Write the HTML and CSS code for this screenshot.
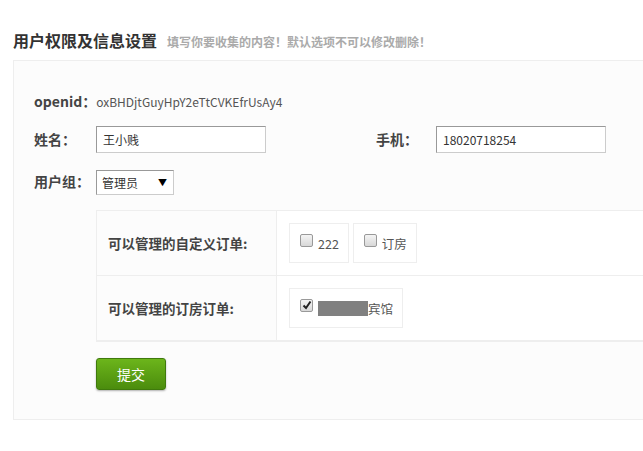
FILE: index.html
```html
<!DOCTYPE html>
<html>
<head>
<meta charset="utf-8">
<link rel="stylesheet" href="styles.css">
</head>
<body>
<div class="page">
  <h2 class="title">用户权限及信息设置<span class="sub">填写你要收集的内容！默认选项不可以修改删除！</span></h2>
  <div class="panel">
    <div class="row openid"><span class="lbl">openid：</span><span class="val">oxBHDjtGuyHpY2eTtCVKEfrUsAy4</span></div>
    <div class="row">
      <span class="lbl">姓名：</span><input class="txt" type="text" value="王小贱">
      <span class="lbl lbl2">手机：</span><input class="txt" type="text" value="18020718254">
    </div>
    <div class="row">
      <span class="lbl">用户组：</span>
      <div class="sel"><span>管理员</span><span class="arr">▼</span></div>
    </div>
    <div class="tbl">
      <div class="tr">
        <div class="th">可以管理的自定义订单:</div>
        <div class="td">
          <label class="opt"><span class="cb"></span>222</label>
          <label class="opt"><span class="cb"></span>订房</label>
        </div>
      </div>
      <div class="tr">
        <div class="th">可以管理的订房订单:</div>
        <div class="td">
          <label class="opt"><span class="cb on"><svg width="10" height="10" viewBox="0 0 10 10"><path d="M1.5 5.5 L4 8 L8.5 1.5" fill="none" stroke="#222" stroke-width="2"/></svg></span><span class="mask"></span>宾馆</label>
        </div>
      </div>
    </div>
    <button class="btn">提交</button>
  </div>
</div>
</body>
</html>
```
FILE: styles.css
```css
html, body { margin: 0; padding: 0; background: #fff; }
body { font-family: "Microsoft YaHei", "Noto Sans CJK SC", sans-serif; color: #333; width: 643px; height: 451px; overflow: hidden; }
.page { padding: 28px 0 0 13px; }
.title { margin: 0; font-size: 16px; font-weight: bold; color: #333; line-height: 24px; height: 32px; }
.sub { font-size: 12px; color: #aaa; margin-left: 10px; font-weight: bold; }
.panel { background: #fcfcfc; border: 1px solid #eee; border-right: none; width: 660px; height: 360px; box-sizing: border-box; padding: 30px 0 0 20px; }
.row { display: flex; align-items: center; height: 26px; margin-bottom: 16px; }
.openid { height: 20px; margin-bottom: 15px; }
.lbl { font-size: 14px; font-weight: bold; color: #444; width: 62px; }
.openid .lbl { width: auto; }
.val { font-size: 12px; color: #555; }
.lbl2 { margin-left: 110px; width: 60px; }
.txt { width: 170px; height: 27px; box-sizing: border-box; border: 1px solid #ccc; border-top-color: #999; border-left-color: #999; padding: 0 6px; font: 12px "Microsoft YaHei", "Noto Sans CJK SC", sans-serif; color: #333; background: #fff; margin: 0; outline: none; }
.sel { width: 78px; height: 25px; box-sizing: border-box; border: 1px solid #ccc; border-top-color: #999; border-left-color: #999; background: #fff; font-size: 12px; display: flex; align-items: center; justify-content: space-between; padding: 0 6px 0 5px; margin-top: 2px; }
.arr { font-size: 9px; color: #000; }
.tbl { margin-left: 62px; margin-top: 1px; border-top: 1px solid #eee; border-bottom: 2px solid #eee; border-left: 1px solid #eee; }
.tr { display: flex; height: 64px; }
.tr + .tr { border-top: 1px solid #eee; height: 64px; }
.th { width: 180px; box-sizing: border-box; border-right: 1px solid #eee; display: flex; align-items: center; padding-left: 11px; font-size: 13.5px; font-weight: bold; color: #444; background: #fcfcfc; }
.td { flex: 1; background: #fff; display: flex; align-items: center; padding-left: 12px; gap: 4px; }
.opt { height: 40px; box-sizing: border-box; border: 1px solid #eee; display: flex; align-items: center; padding: 0 9px 0 10px; font-size: 12.5px; color: #555; background: #fff; }
.cb { width: 11px; height: 11px; border: 1px solid #999; border-radius: 2px; background: linear-gradient(#f4f4f4, #d8d8d8); margin-right: 5px; margin-top: -6px; display: inline-flex; align-items: center; justify-content: center; }
.mask { display: inline-block; width: 50px; height: 15px; background: #808080; }
.btn { margin: 16px 0 0 62px; width: 70px; height: 32px; border: 1px solid #3f7a0c; border-radius: 3px; background: linear-gradient(#6cb51b, #4b8c0d); color: #fff; font: 14px "Microsoft YaHei", "Noto Sans CJK SC", sans-serif; box-shadow: 0 1px 2px rgba(0,0,0,0.3); padding: 0; }
```
